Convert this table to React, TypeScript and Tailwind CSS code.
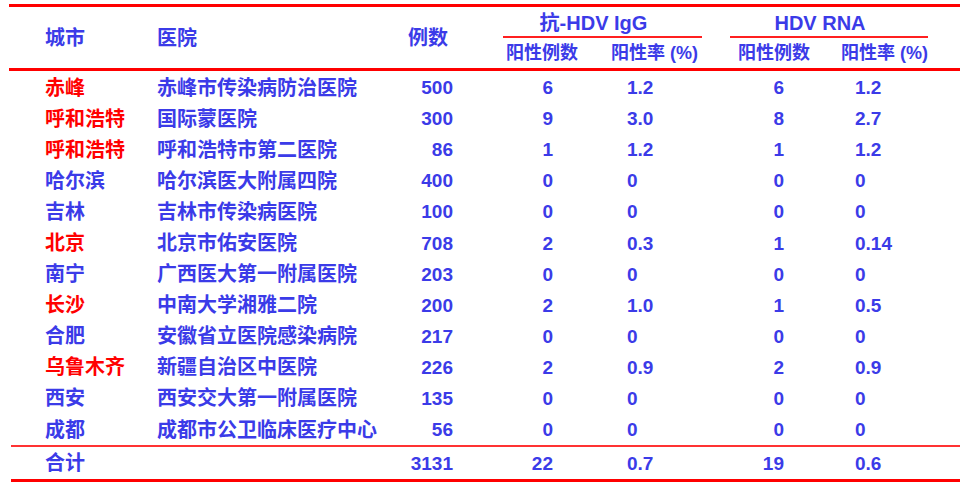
import React from "react";

type Row = {
  city: string;
  hot?: boolean;
  hospital: string;
  cases: string;
  iggPos: string;
  iggRate: string;
  rnaPos: string;
  rnaRate: string;
};

const rows: Row[] = [
  { city: "赤峰", hot: true, hospital: "赤峰市传染病防治医院", cases: "500", iggPos: "6", iggRate: "1.2", rnaPos: "6", rnaRate: "1.2" },
  { city: "呼和浩特", hot: true, hospital: "国际蒙医院", cases: "300", iggPos: "9", iggRate: "3.0", rnaPos: "8", rnaRate: "2.7" },
  { city: "呼和浩特", hot: true, hospital: "呼和浩特市第二医院", cases: "86", iggPos: "1", iggRate: "1.2", rnaPos: "1", rnaRate: "1.2" },
  { city: "哈尔滨", hospital: "哈尔滨医大附属四院", cases: "400", iggPos: "0", iggRate: "0", rnaPos: "0", rnaRate: "0" },
  { city: "吉林", hospital: "吉林市传染病医院", cases: "100", iggPos: "0", iggRate: "0", rnaPos: "0", rnaRate: "0" },
  { city: "北京", hot: true, hospital: "北京市佑安医院", cases: "708", iggPos: "2", iggRate: "0.3", rnaPos: "1", rnaRate: "0.14" },
  { city: "南宁", hospital: "广西医大第一附属医院", cases: "203", iggPos: "0", iggRate: "0", rnaPos: "0", rnaRate: "0" },
  { city: "长沙", hot: true, hospital: "中南大学湘雅二院", cases: "200", iggPos: "2", iggRate: "1.0", rnaPos: "1", rnaRate: "0.5" },
  { city: "合肥", hospital: "安徽省立医院感染病院", cases: "217", iggPos: "0", iggRate: "0", rnaPos: "0", rnaRate: "0" },
  { city: "乌鲁木齐", hot: true, hospital: "新疆自治区中医院", cases: "226", iggPos: "2", iggRate: "0.9", rnaPos: "2", rnaRate: "0.9" },
  { city: "西安", hospital: "西安交大第一附属医院", cases: "135", iggPos: "0", iggRate: "0", rnaPos: "0", rnaRate: "0" },
  { city: "成都", hospital: "成都市公卫临床医疗中心", cases: "56", iggPos: "0", iggRate: "0", rnaPos: "0", rnaRate: "0" },
];

// numeric cells share one set of widths so totals line up with rows
const Numbers = ({ r }: { r: Pick<Row, "cases" | "iggPos" | "iggRate" | "rnaPos" | "rnaRate"> }) => (
  <>
    <div className="w-[75px] text-right text-[19px]">{r.cases}</div>
    <div className="w-[100px] text-right text-[19px]">{r.iggPos}</div>
    <div className="w-[147px] pl-[74px] text-[19px]">{r.iggRate}</div>
    <div className="w-[84px] text-right text-[19px]">{r.rnaPos}</div>
    <div className="pl-[71px] text-[19px]">{r.rnaRate}</div>
  </>
);

const DataRow = ({ r }: { r: Row }) => (
  <div className="flex h-[31.1px] items-center whitespace-nowrap">
    <div className={`w-[112px] ${r.hot ? "text-[#ff0000]" : "text-[#3b3be8]"}`}>{r.city}</div>
    <div className="w-[221px]">{r.hospital}</div>
    <Numbers r={r} />
  </div>
);

const RedLine = ({ thick, inset }: { thick?: boolean; inset: string }) => (
  <div className={inset}>
    <div className={thick ? "h-[3px] bg-[#ff0000]" : "h-[2px] bg-[#ff3333]"} />
  </div>
);

export default function App() {
  return (
    <div
      className="w-[960px] h-[485px] bg-white overflow-hidden text-[#3b3be8] text-[20px] font-bold leading-none"
      style={{ fontFamily: '"Liberation Sans", "Noto Sans CJK SC", sans-serif' }}
    >
      <div className="pt-[4px]">
        <RedLine thick inset="pl-[9px]" />
      </div>

      {/* header */}
      <div className="flex h-[61px] pl-[45px] whitespace-nowrap">
        <div className="w-[112px] self-center">城市</div>
        <div className="w-[221px] self-center">医院</div>
        <div className="w-[75px] self-center text-right pr-[5px]">例数</div>
        <div className="ml-[50px] w-[199px] flex flex-col">
          <div className="h-[29px] flex items-end justify-center pr-[18px] pb-[3px]">抗-HDV IgG</div>
          <div className="h-[1.5px] bg-[#ff2020]" />
          <div className="flex pt-[6px] text-[18px]">
            <div className="pl-[3px] w-[108px]">阳性例数</div>
            <div>阳性率 (%)</div>
          </div>
        </div>
        <div className="ml-[28px] w-[198px] flex flex-col">
          <div className="h-[29px] flex items-end justify-center pr-[18px] pb-[3px]">HDV RNA</div>
          <div className="h-[1.5px] bg-[#ff2020]" />
          <div className="flex pt-[6px] text-[18px]">
            <div className="pl-[8px] w-[113px]">阳性例数</div>
            <div>阳性率 (%)</div>
          </div>
        </div>
      </div>

      <RedLine thick inset="pl-[9px]" />

      <div className="pl-[45px] pt-[1px]">
        {rows.map((r, i) => (
          <DataRow key={i} r={r} />
        ))}
      </div>

      <RedLine inset="pl-[11px]" />

      <div className="flex h-[32px] items-center pl-[45px] whitespace-nowrap">
        <div className="w-[112px]">合计</div>
        <div className="w-[221px]"></div>
        <Numbers r={{ cases: "3131", iggPos: "22", iggRate: "0.7", rnaPos: "19", rnaRate: "0.6" }} />
      </div>

      <RedLine thick inset="pl-[11px]" />
    </div>
  );
}
